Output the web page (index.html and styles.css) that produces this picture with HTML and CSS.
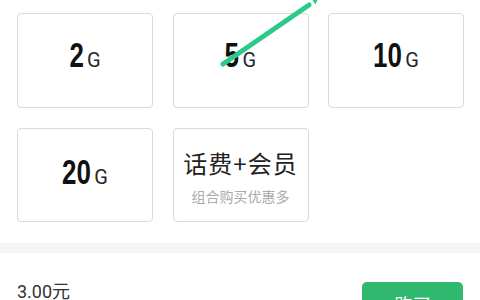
FILE: index.html
```html
<!DOCTYPE html>
<html lang="zh-CN">
<head>
<meta charset="utf-8">
<link rel="stylesheet" href="styles.css">
</head>
<body>
<div class="page">
  <div class="grid">
    <div class="card"><span class="val"><span class="num">2</span><span class="unit">G</span></span></div>
    <div class="card"><span class="val"><span class="num">5</span><span class="unit">G</span></span></div>
    <div class="card"><span class="val"><span class="num two">10</span><span class="unit">G</span></span></div>
    <div class="card row2"><span class="val"><span class="num two">20</span><span class="unit">G</span></span></div>
    <div class="card combo">
      <div class="combo-title">话费+会员</div>
      <div class="combo-sub">组合购买优惠多</div>
    </div>
  </div>
  <div class="divider"></div>
  <div class="footer">
    <span class="price">3.00元</span>
    <button class="buy">购买</button>
  </div>
  <svg class="arrow" width="480" height="80" viewBox="0 0 480 80">
    <line x1="223" y1="64" x2="309" y2="5" stroke="#2bca8b" stroke-width="5" stroke-linecap="round"/>
    <polygon points="322,-10 315.5,4.5 307.5,-7" fill="#2bca8b"/>
  </svg>
</div>
</body>
</html>
```
FILE: styles.css
```css
html, body {
  margin: 0;
  padding: 0;
  background: #ffffff;
}
.page {
  position: relative;
  width: 480px;
  height: 300px;
  overflow: hidden;
  font-family: "Roboto", "Liberation Sans", "Noto Sans CJK SC", sans-serif;
}
.grid {
  display: grid;
  grid-template-columns: repeat(3, 136px);
  grid-template-rows: 95px 94px;
  column-gap: 19.5px;
  row-gap: 20px;
  padding: 13px 0 0 17px;
}
.card {
  box-sizing: border-box;
  border: 1px solid #d9d9d9;
  border-radius: 4px;
  display: flex;
  align-items: center;
  justify-content: center;
}
.val {
  display: block;
  line-height: 1;
  white-space: nowrap;
  margin-bottom: 12px;
}
.row2 .val {
  margin-bottom: 8px;
}
.num {
  font-family: "Liberation Sans", sans-serif;
  font-weight: bold;
  font-size: 35px;
  color: #111111;
  display: inline-block;
  transform: scaleX(0.74);
  transform-origin: center;
  margin: 0 -0.072em;
}
.num.two {
  margin: 0 -0.144em;
}
.unit {
  font-family: "Roboto", "Liberation Sans", sans-serif;
  font-size: 20px;
  color: #262626;
  margin-left: 3px;
}
.combo {
  flex-direction: column;
}
.combo-title {
  font-family: "Noto Sans CJK SC", sans-serif;
  font-size: 24px;
  letter-spacing: 1px;
  color: #222222;
  line-height: 1;
  margin-top: 3px;
}
.combo-sub {
  font-family: "Noto Sans CJK SC", sans-serif;
  font-size: 14px;
  color: #ababab;
  line-height: 1;
  margin-top: 14px;
}
.divider {
  margin-top: 21px;
  height: 10px;
  background: #f4f4f4;
}
.footer {
  display: flex;
  justify-content: space-between;
  align-items: flex-start;
  padding: 0 17px 0 17px;
}
.price {
  margin-top: 28px;
  font-family: "Roboto", "Liberation Sans", "Noto Sans CJK SC", sans-serif;
  font-size: 18px;
  color: #333333;
  line-height: 1.2;
}
.buy {
  margin-top: 29px;
  width: 101px;
  height: 44px;
  border: none;
  border-radius: 5px;
  background: #2fb86e;
  color: #ffffff;
  font-family: "Noto Sans CJK SC", sans-serif;
  font-size: 18px;
  padding: 0;
}
.arrow {
  position: absolute;
  left: 0;
  top: 0;
  pointer-events: none;
}
```
